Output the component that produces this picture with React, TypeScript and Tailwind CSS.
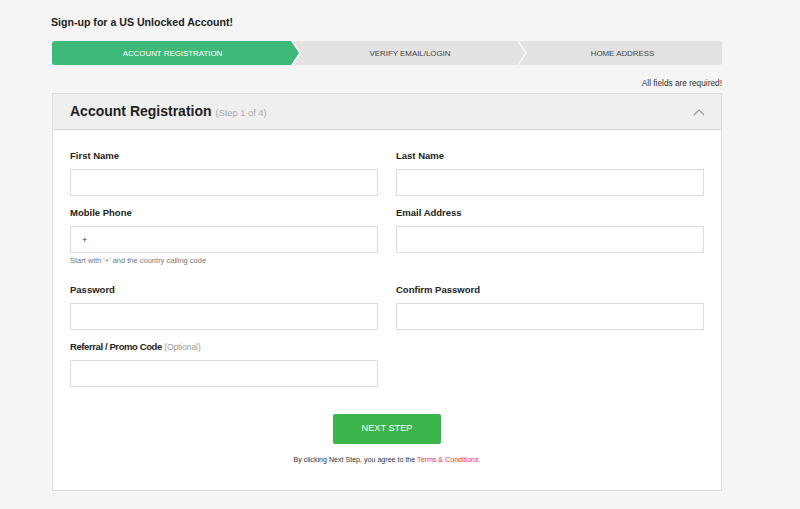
import { useState } from 'react';

const steps = [
  { name: 'ACCOUNT REGISTRATION', width: 'w-[247px]', active: true, first: true },
  { name: 'VERIFY EMAIL/LOGIN', width: 'w-[232px]', active: false, first: false },
  { name: 'HOME ADDRESS', width: 'w-[203px]', active: false, first: false, last: true },
];

function Field({ label, optional, hint, prefix }: { label: string; optional?: boolean; hint?: string; prefix?: string }) {
  const [value, setValue] = useState(prefix ?? '');
  return (
    <div className="flex flex-col">
      <label className="block h-[12px] overflow-visible text-[9.5px] leading-[12px] font-bold text-[#222]">
        {optional ? <span className="tracking-[-0.4px]">{label}</span> : label}
        {optional && <span className="font-normal text-[#999] text-[8.3px]"> (Optional)</span>}
      </label>
      <input
        value={value}
        onChange={(e) => setValue(e.target.value)}
        className="mt-[7px] h-[27px] w-full border border-[#dcdcdc] bg-white px-[11px] text-[9px] text-[#444] outline-none"
      />
      {hint && <p className="mt-[3px] mb-[7px] h-[10px] text-[7.5px] leading-[10px] text-[#777]">{hint}</p>}
    </div>
  );
}

export default function App() {
  return (
    <div className="min-h-screen bg-[#f5f5f5] pl-[52px] pt-[15px] pb-[20px] font-['Liberation_Sans',Arial,sans-serif]">
      <div className="w-[670px]">
        <h1 className="text-[10.6px] leading-[14px] font-bold text-[#222] -ml-[1px]">Sign-up for a US Unlocked Account!</h1>

        {/* Steps */}
        <div className="mt-[12px] flex h-[24px]">
          {steps.map((s, i) => (
            <div
              key={s.name}
              className={`${s.width} ${i > 0 ? '-ml-[6px]' : ''} flex h-full items-center justify-center pt-[1px] text-[7.9px] ${
                s.active ? 'bg-[#3dba79] text-white rounded-l-[3px]' : 'bg-[#e2e2e2] text-[#444]'
              } ${
                s.first
                  ? '[clip-path:polygon(0_0,calc(100%-8px)_0,100%_50%,calc(100%-8px)_100%,0_100%)]'
                  : s.last
                  ? 'rounded-r-[3px] [clip-path:polygon(0_0,100%_0,100%_100%,0_100%,8px_50%)]'
                  : '[clip-path:polygon(0_0,calc(100%-8px)_0,100%_50%,calc(100%-8px)_100%,0_100%,8px_50%)]'
              }`}
            >
              <span className={i === 0 ? '-ml-[6px]' : i === 1 ? 'ml-[2px]' : 'ml-[4px]'}>{s.name}</span>
            </div>
          ))}
        </div>

        <p className="mt-[13px] text-right text-[8.3px] leading-[10px] text-[#333]">All fields are required!</p>

        {/* Card */}
        <div className="mt-[5px] border border-[#dcdcdc] bg-white">
          <div className="flex h-[36px] items-center justify-between border-b border-[#d6d6d6] bg-[#efefef] pl-[17px] pr-[16px]">
            <h2 className="text-[14px] font-bold text-[#222]">
              Account Registration <span className="text-[9.3px] font-normal text-[#aaa]">(Step 1 of 4)</span>
            </h2>
            <svg width="12" height="8" viewBox="0 0 12 8" fill="none" stroke="#999" strokeWidth="1.1">
              <polyline points="1,7 6,2 11,7" />
            </svg>
          </div>

          <div className="px-[17px] pt-[20px] pb-[25px]">
            <div className="grid grid-cols-2 gap-x-[18px] gap-y-[11px]">
              <Field label="First Name" />
              <Field label="Last Name" />
              <Field label="Mobile Phone" prefix="+" hint="Start with '+' and the country calling code" />
              <Field label="Email Address" />
              <Field label="Password" />
              <Field label="Confirm Password" />
              <Field label="Referral / Promo Code" optional />
            </div>

            <div className="mt-[27px] flex flex-col items-center">
              <button className="h-[30px] w-[108px] rounded-[2px] bg-[#3bb54b] text-[9.2px] text-white">NEXT STEP</button>
              <p className="mt-[11px] h-[10px] text-[7.1px] leading-[10px] text-[#333]">
                By clicking Next Step, you agree to the <span className="text-[#e8343f]">Terms &amp; Conditions.</span>
              </p>
            </div>
          </div>
        </div>
      </div>
    </div>
  );
}
